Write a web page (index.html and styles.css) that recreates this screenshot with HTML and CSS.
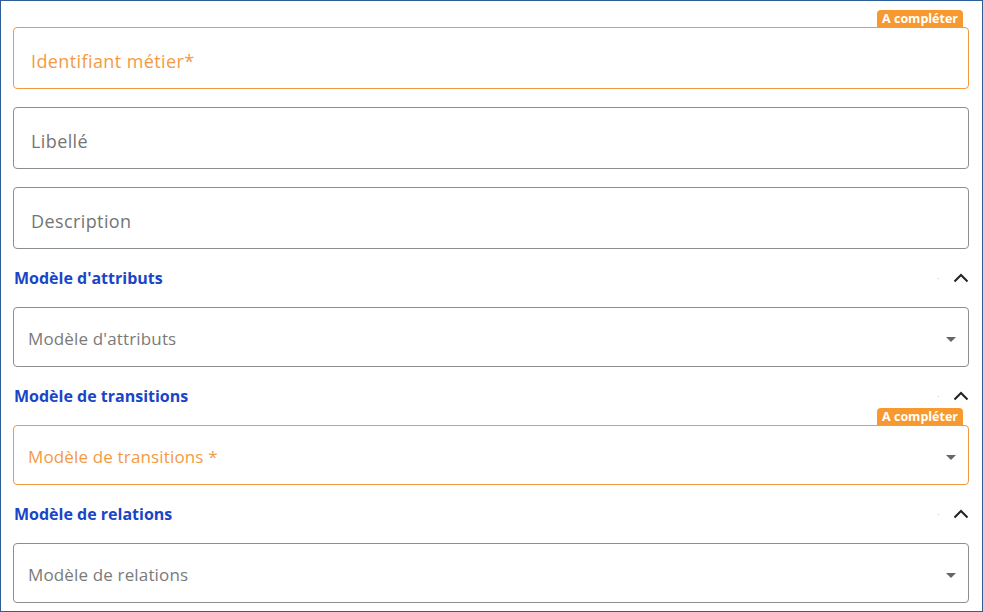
FILE: index.html
```html
<!DOCTYPE html>
<html lang="fr">
<head>
<meta charset="utf-8">
<title>Formulaire</title>
<link rel="stylesheet" href="styles.css">
</head>
<body>
<div class="frame">
  <div class="field">
    <span class="badge">A compléter</span>
    <div class="input input--todo">Identifiant métier*</div>
  </div>
  <div class="field">
    <div class="input">Libellé</div>
  </div>
  <div class="field">
    <div class="input">Description</div>
  </div>

  <div class="section-head">
    <span class="section-title">Modèle d'attributs</span>
    <span class="dot"></span>
    <svg class="chevron" width="16" height="10" viewBox="0 0 16 10"><path d="M1.5 8.5 L8 2 L14.5 8.5" fill="none" stroke="#222" stroke-width="2"/></svg>
  </div>
  <div class="field">
    <div class="select"><span>Modèle d'attributs</span><span class="caret"></span></div>
  </div>

  <div class="section-head">
    <span class="section-title">Modèle de transitions</span>
    <span class="dot"></span>
    <svg class="chevron" width="16" height="10" viewBox="0 0 16 10"><path d="M1.5 8.5 L8 2 L14.5 8.5" fill="none" stroke="#222" stroke-width="2"/></svg>
  </div>
  <div class="field">
    <span class="badge">A compléter</span>
    <div class="select select--todo"><span>Modèle de transitions *</span><span class="caret"></span></div>
  </div>

  <div class="section-head">
    <span class="section-title">Modèle de relations</span>
    <span class="dot"></span>
    <svg class="chevron" width="16" height="10" viewBox="0 0 16 10"><path d="M1.5 8.5 L8 2 L14.5 8.5" fill="none" stroke="#222" stroke-width="2"/></svg>
  </div>
  <div class="field">
    <div class="select"><span>Modèle de relations</span><span class="caret"></span></div>
  </div>
</div>
</body>
</html>
```
FILE: styles.css
```css
* { box-sizing: border-box; }
html, body { margin: 0; padding: 0; background: #fff; }
body {
  font-family: "Open Sans", "Noto Sans", sans-serif;
  font-variant-ligatures: none;
}

.frame {
  width: 983px;
  height: 612px;
  border: 1px solid #2d5e98;
  padding: 26px 13px 8px 12px;
  display: flex;
  flex-direction: column;
  gap: 18px;
  overflow: hidden;
}

.field { position: relative; }

.badge {
  position: absolute;
  right: 6px;
  top: -17px;
  height: 17px;
  padding: 0 5px;
  background: #f7992f;
  color: #fff;
  font-weight: 700;
  font-size: 12.5px;
  line-height: 17px;
  border-radius: 4px 4px 0 0;
}

.input {
  height: 62px;
  border: 1px solid #8e8e8e;
  border-radius: 4px;
  display: flex;
  align-items: center;
  padding-left: 17px;
  padding-top: 5px;
  font-size: 18px;
  letter-spacing: 0.4px;
  color: #757575;
}
.input--todo { border-color: #f29a3e; color: #f39a45; }

.section-head {
  height: 22px;
  display: flex;
  align-items: center;
  padding-left: 1px;
}
.section-title {
  flex: 1;
  font-weight: 700;
  font-size: 16px;
  color: #1a45c6;
}
.dot {
  width: 1px;
  height: 1px;
  background: #c8c8c8;
  margin-right: 14px;
}
.chevron { display: block; }

.select {
  height: 60px;
  border: 1px solid #8e8e8e;
  border-radius: 4px;
  display: flex;
  align-items: center;
  justify-content: space-between;
  padding: 2px 12px 0 14px;
  font-size: 17px;
  letter-spacing: 0.15px;
  color: #7a7a7a;
}
.select--todo { border-color: #f29a3e; color: #f39a45; }

.caret {
  width: 0;
  height: 0;
  border-left: 5px solid transparent;
  border-right: 5px solid transparent;
  border-top: 5px solid #666;
  margin-top: 2px;
}
```
